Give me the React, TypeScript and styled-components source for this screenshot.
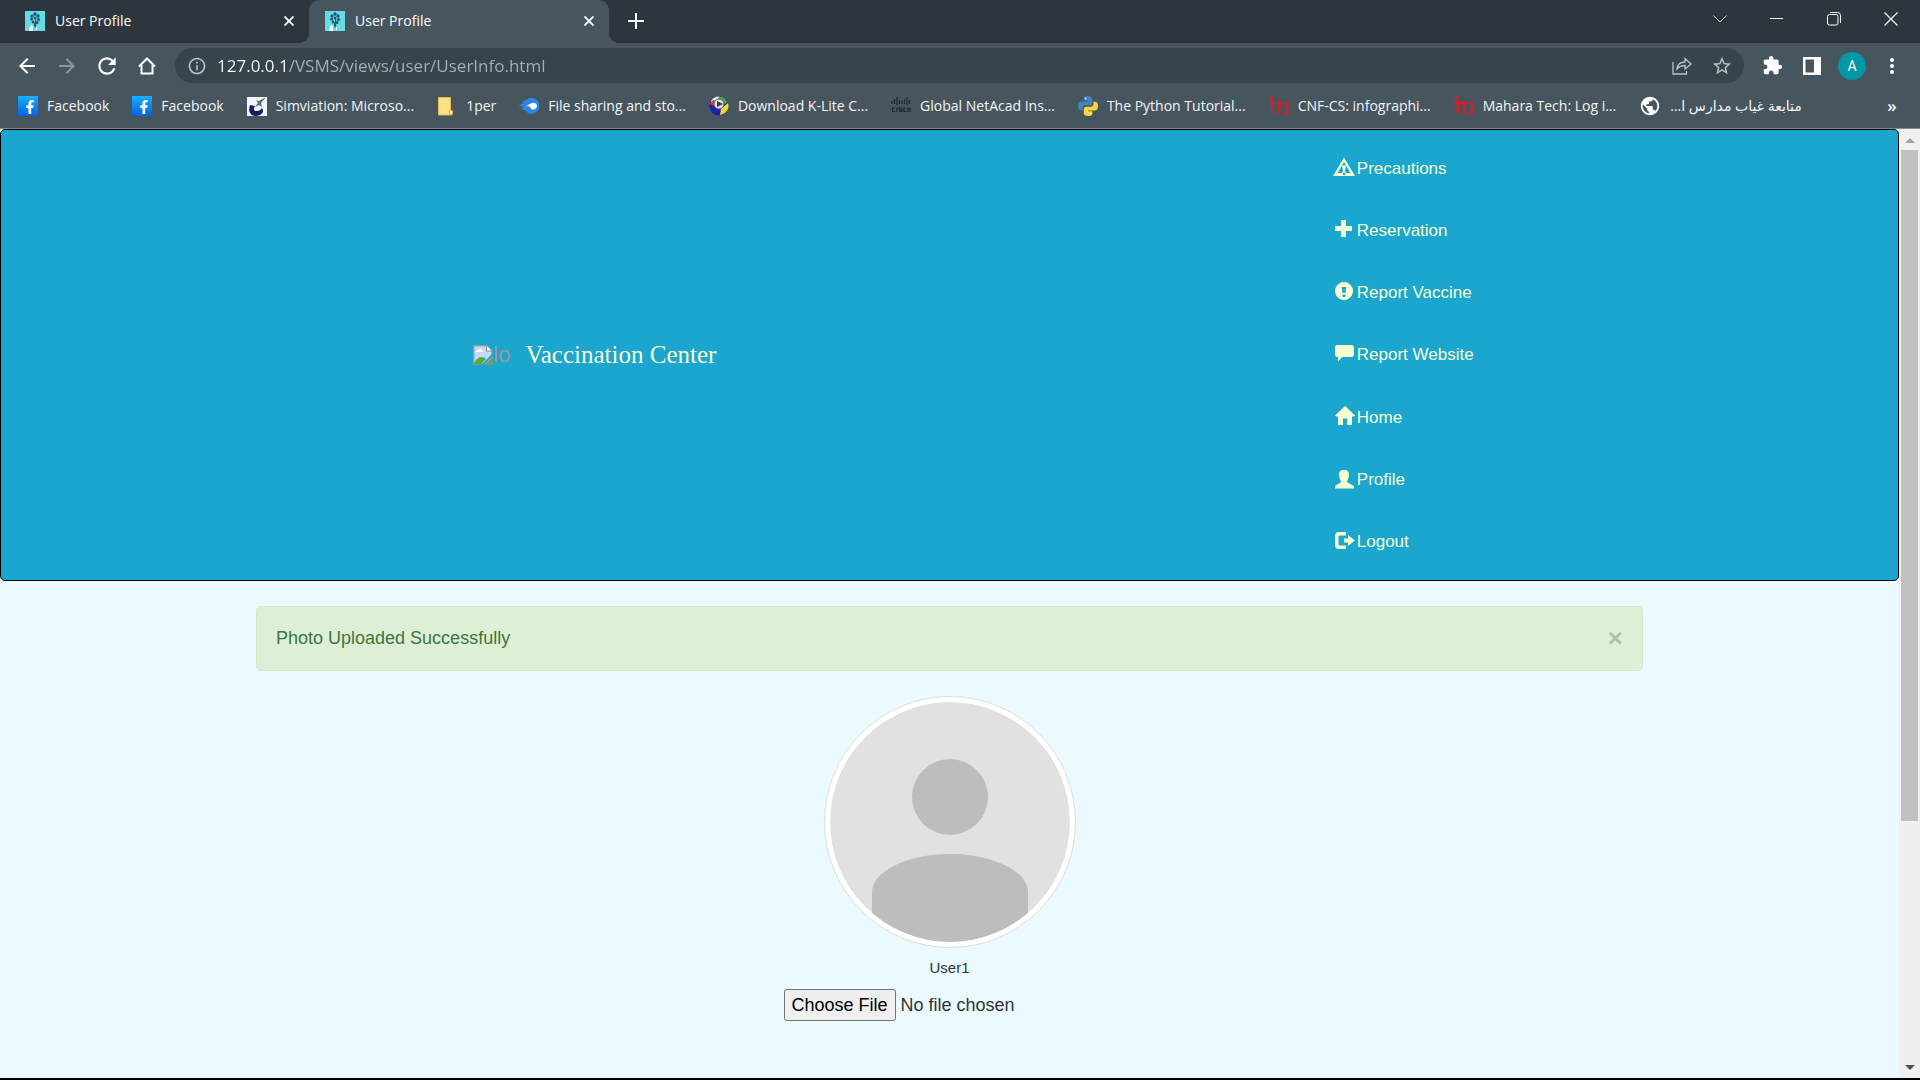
import React, { useId } from "react";
import styled, { createGlobalStyle } from "styled-components";
import { MdExtension, MdInfoOutline, MdStarBorder, MdRefresh, MdPublic, MdArrowBack, MdArrowForward } from "react-icons/md";
import { FaFacebookF } from "react-icons/fa";

const ui = `"Open Sans", "Noto Sans", "DejaVu Sans", sans-serif`;
const sans = `"Liberation Sans", Arial, sans-serif`;

const GlobalStyle = createGlobalStyle`
  * { box-sizing: border-box; }
  body { margin: 0; background: #ebfaff; color: #333; font: 18px/25px ${sans}; }
  button { border: 0; padding: 0; background: none; color: inherit; font: inherit; cursor: pointer; }
  svg { display: block; flex: none; }
`;

const Window = styled.div`
  display: flex;
  flex-direction: column;
  height: 100vh;
  border-bottom: 2px solid #000;
`;

const Chrome = styled.header`
  flex: none;
  background: #46555e;
  border-bottom: 1px solid #80888d;
  color: #fff;
  font-family: ${ui};
`;

const TabStrip = styled.div`
  display: flex;
  height: 43px;
  padding: 0 1px 0 9px;
  background: #2c363c;
`;

const Tab = styled.div<{ $active?: boolean }>`
  position: relative;
  display: flex;
  align-items: center;
  gap: 10px;
  width: 300px;
  padding: 0 10px 2px 16px;
  border-radius: 10px 10px 0 0;
  background: ${(p) => (p.$active ? "#46555e" : "transparent")};
  font-size: 14px;
  line-height: 20px;

  &::before,
  &::after {
    content: ${(p) => (p.$active ? '""' : "none")};
    position: absolute;
    bottom: 0;
    width: 10px;
    height: 10px;
  }
  &::before {
    right: 100%;
    background: radial-gradient(circle at 0 0, transparent 10px, #46555e 10px);
  }
  &::after {
    left: 100%;
    background: radial-gradient(circle at 100% 0, transparent 10px, #46555e 10px);
  }
`;

const TabTitle = styled.span`
  flex: 1;
`;

const TabButton = styled.button`
  display: grid;
  place-items: center;
  width: 20px;
  height: 20px;
`;

const NewTab = styled(TabButton)`
  width: 54px;
  height: 42px;
`;

const WindowControls = styled.div`
  display: flex;
  margin-left: auto;
`;

const WindowButton = styled.button`
  display: grid;
  place-items: center;
  width: 57px;
  height: 38px;
`;

const Toolbar = styled.div`
  display: flex;
  align-items: center;
  gap: 8px;
  height: 45px;
  padding: 0 8px 0 7px;
`;

const ToolGroup = styled.div`
  display: flex;
`;

const ToolButton = styled.button<{ $dim?: boolean }>`
  display: grid;
  place-items: center;
  width: 40px;
  height: 36px;
  color: ${(p) => (p.$dim ? "#8b969c" : "#fff")};
`;

const Omnibox = styled.div`
  display: flex;
  flex: 1;
  align-items: center;
  gap: 10px;
  height: 35px;
  padding: 0 2px 0 12px;
  border-radius: 18px;
  background: #38444b;
  color: #bcc1c4;
`;

const Address = styled.input`
  flex: 1;
  border: 0;
  padding: 0;
  outline: 0;
  color: transparent;
  background: linear-gradient(90deg, #fff 72px, #a9b0b3 72px);
  background-clip: text;
  font: 17px/24px ${ui};
`;

const Account = styled.span`
  display: grid;
  place-items: center;
  width: 28px;
  height: 28px;
  border-radius: 50%;
  background: #0097a7;
  font: 14px/20px Roboto, sans-serif;
`;

const Bookmarks = styled.nav`
  display: flex;
  align-items: center;
  gap: 23px;
  height: 40px;
  padding: 0 8px 4px 18px;
  font-size: 14px;
  line-height: 20px;
`;

const Bookmark = styled.a`
  display: flex;
  align-items: center;
  gap: 9px;
  color: #f4f6f7;
  text-decoration: none;
  white-space: nowrap;
`;

const More = styled.button`
  width: 40px;
  margin-left: auto;
  font-weight: 600;
  font-size: 17px;
`;

const Viewport = styled.div`
  display: flex;
  flex: 1;
  min-height: 0;
`;

const Page = styled.div`
  flex: 1;
  overflow: hidden;
`;

const Scrollbar = styled.div`
  display: flex;
  flex-direction: column;
  flex: none;
  width: 21px;
  padding: 0 2px;
  background: #f0f0f0;
`;

const ScrollArrow = styled.button`
  display: grid;
  place-items: center;
  height: 21px;
`;

const Track = styled.div`
  flex: 1;
`;

const Thumb = styled.div`
  height: 74%;
  background: #c1c1c1;
`;

const Navbar = styled.header`
  display: grid;
  grid-template-columns: 249fr 452fr 299fr;
  align-items: center;
  padding: 7px 0;
  border: 1px solid #000;
  border-radius: 5px;
  background: #1aa6ce;
`;

const Brand = styled.a`
  display: flex;
  align-items: center;
  grid-column: 2;
  gap: 15px;
  color: #f7ffd2;
  font: 25px/30px "Liberation Serif", Georgia, serif;
  text-decoration: none;
`;

const MissingLogo = styled.span`
  display: flex;
  align-items: center;
  color: #999;
  font: 22px/26px ${sans};
`;

const Menu = styled.ul`
  display: grid;
  grid-auto-rows: 1fr;
  height: 436px;
  margin: 0;
  padding: 0 0 0 2px;
  list-style: none;
`;

const MenuItem = styled.li`
  display: flex;
  align-items: center;
`;

const MenuLink = styled.a`
  display: flex;
  align-items: center;
  gap: 2px;
  color: #f7ffd2;
  font-size: 17px;
  text-decoration: none;

  svg { margin-bottom: 2px; }
`;

const Content = styled.main`
  display: flex;
  flex-direction: column;
  align-items: center;
  padding: 25px 20px;
`;

const Alert = styled.div`
  display: flex;
  align-items: center;
  justify-content: space-between;
  width: 100%;
  max-width: 1387px;
  padding: 19px;
  border: 1px solid #d6e9c6;
  border-radius: 5px;
  background: #deefd8;
  color: #3c763d;
`;

const Dismiss = styled.button`
  color: #000;
  font-weight: 700;
  font-size: 26px;
  line-height: 25px;
  opacity: 0.2;
`;

const Profile = styled.form`
  display: flex;
  flex-direction: column;
  align-items: center;
  width: 332px;
  margin-top: 25px;
`;

const Photo = styled.svg`
  width: 252px;
  height: 252px;
  padding: 5px;
  border: 1px solid #ddd;
  border-radius: 50%;
  background: #fff;
`;

const UserName = styled.label`
  margin: 10px 0 11px;
  font-size: 15px;
  line-height: 20px;
`;

const FileInput = styled.input`
  width: 100%;
  color: #333;
  font: 18px/25px ${sans};

  &::file-selector-button {
    height: 32px;
    margin: 0 5px 0 0;
    padding: 0 7px;
    border: 1px solid #767676;
    border-radius: 3px;
    background: #efefef;
    color: #000;
    font: 18px/25px ${sans};
  }
`;

const Favicon = () => (
  <svg width="20" height="20" viewBox="0 0 20 20">
    <path fill="#67dbe2" d="M0 0h20v20H0z" />
    <g fill="#165a78">
      <circle cx="10" cy="3" r="1.7" /><circle cx="7" cy="5" r="1.6" /><circle cx="13" cy="5" r="1.7" />
      <circle cx="6.500" cy="8" r="1.500" /><circle cx="10" cy="7" r="1.500" /><circle cx="13.500" cy="8.500" r="1.600" />
      <circle cx="8" cy="11" r="1.400" /><circle cx="12" cy="11.500" r="1.500" />
      <path d="M9.500 8h1.300l.4 7-1.200 2-.9-2z" />
    </g>
    <path fill="#effcfd" d="M5 15l2-1 1 2v4H4zM11 16h1v3h-1z" />
    <path fill="#bda974" d="M9 8h1v3H9z" />
  </svg>
);

const FacebookIcon = () => {
  const id = useId();
  return (
    <svg width="20" height="20" viewBox="0 0 20 20">
      <defs>
        <linearGradient id={id} x1="0" y1="0" x2="0" y2="1">
          <stop stopColor="#18aefe" /><stop offset="1" stopColor="#0062e0" />
        </linearGradient>
      </defs>
      <path fill={`url(#${id})`} d="M0 0h20v20H0z" />
      <FaFacebookF x={5} y={4} width={12} height={17} color="#fff" />
    </svg>
  );
};

const SimviationIcon = () => (
  <svg width="20" height="20" viewBox="0 0 20 20">
    <path fill="#f5f6fa" d="M0 1h20v19H0z" />
    <path fill="#10205e" d="M3 9l5 1c-2 3-1 5 1 5 3 0 5-1 6-3 3 4-1 8-6 8-6 0-8-5-6-11z" />
    <path fill="#5b6b80" d="M19 1l-5 6 1 4-3-2-4 2 3-4-2-3 3 1z" />
  </svg>
);

const FolderIcon = () => (
  <svg width="20" height="20" viewBox="0 0 20 20">
    <path fill="#ffe08a" stroke="#e5bd45" d="M1.500 1.500h12v13l1.500.500v4H1.500z" />
    <path fill="#ffefb4" stroke="#d6ab31" d="M12.500 14.500h3v4h-3z" />
  </svg>
);

const MediaFireIcon = () => (
  <svg width="20" height="20" viewBox="0 0 20 20">
    <path fill="#2b86df" d="M0 10c1-2 3-2 5-3-1-1-2-1-3-1 2-1 4-1 5-2a8 8 0 1 1 2 13c-2-1-2-3-4-3s-2-1-3-1c1-1 2-1 2-2-1-1-3-1-4-1z" />
    <path fill="#fff" d="M7 9c2 0 3 0 5-1.500 3-2 6 0 6 2.500s-3 4.500-6 3c0-2-2-3-5-4z" />
  </svg>
);

const KLiteIcon = () => (
  <svg width="20" height="20" viewBox="0 0 20 20">
    <circle cx="10" cy="10" r="9.500" fill="#1c21a8" />
    <path fill="#f0ece8" d="M2 5a9.500 9.500 0 0 1 8-4.500L9 6 4 9z" />
    <path fill="#d9402a" d="M1 8l3-4 4 1-3 5z" />
    <path fill="#4ba543" d="M10 .5a9.500 9.500 0 0 1 8.500 6L14 9 9 4z" />
    <path fill="#f2dc29" d="M19 7c2 6-2 11-8 12l1-6z" />
    <circle cx="10" cy="8" r="5" fill="#dfe3e8" stroke="#555c66" />
    <path fill="#353b42" d="M8 5l6 3-6 3z" />
  </svg>
);

const CiscoIcon = () => (
  <svg width="20" height="20" viewBox="0 0 20 20" fill="none" stroke="#20292e">
    <path strokeWidth="1.200" d="M1 5v3M3.500 3v5M6 1v8M8.500 4v4M11 5v3M13.500 3v5M16 1v8M18.500 4v4" />
    <path strokeWidth="1.200" d="M4 12H1.500v3.500H4M6 11.500v4.500M11 12H8.500v1.700h2.500v1.800H8M15 12h-2v3.500h2M17 12h2v3.500h-2z" />
  </svg>
);

const PythonIcon = () => (
  <svg width="20" height="20" viewBox="0 0 20 20">
    <path fill="#4584b6" d="M9.800 0C6 0 5.600 1.600 5.600 2.500v2.200H10v.8H3.200C1 5.500 0 7.300 0 10s1.200 4.300 2.700 4.300h1.800v-2.300c0-1.600 1.300-2.700 2.800-2.700h4.600c1.400 0 2.300-1 2.300-2.300V2.500C14.200.8 12.300 0 9.800 0z" />
    <path fill="#ffd43b" d="M10.200 20c3.800 0 4.200-1.600 4.200-2.500v-2.200H10v-.8h6.800c2.200 0 3.200-1.800 3.200-4.500s-1.200-4.300-2.700-4.300h-1.800V8c0 1.600-1.300 2.700-2.800 2.700H8.100c-1.400 0-2.300 1-2.300 2.300v4.500C5.800 19.200 7.700 20 10.200 20z" />
    <circle cx="7.600" cy="2.600" r=".9" fill="#fff" /><circle cx="12.400" cy="17.400" r=".9" fill="#fff" />
  </svg>
);

const ItiIcon = () => (
  <svg width="20" height="20" viewBox="0 0 20 20" fill="none" stroke="#c4262c" strokeWidth="2.800">
    <path d="M3 0v3M0 5.500h3.500V17M6 7h8M10 7v11M18 9v8l-3 2M16 7h4" />
  </svg>
);

const BrokenImage = () => (
  <svg width="20" height="20" viewBox="0 0 20 20">
    <path fill="#c5d8f5" stroke="#9a9a9a" strokeWidth="1.400" d="M.7.700h13L19 6v7l-6 6H.7z" />
    <path fill="#fff" stroke="#888" d="M13.500.7V6H19" />
    <path fill="#fff" d="M3 7c0-2 2-2 2-2 1-2 4-1 4 1h1v1z" />
    <path fill="#5bab3a" d="M1 19c1-4 4-7 8-7 2 0 3 1 4 2l-5 5z" />
    <path fill="#1aa6ce" d="M20 8v3l-9 9H8z" />
    <path fill="#7d9770" d="M20 13v7h-7z" />
  </svg>
);

const Glyph = ({ d }: { d: string }) => (
  <svg width="22" height="20" viewBox="0 0 22 20" fill="currentColor" fillRule="evenodd"><path d={d} /></svg>
);

const menu = [
  { label: "Precautions", d: "M11 0.500L22 19H0zM11 5L4.500 16h4.300l1.200-2-1-5.500h4L12 14l1.200 2h4.300zM10 15.500h2V18h-2z" },
  { label: "Reservation", d: "M8 1.500Q8 1 8.500 1h4q.5 0 .5.500V7h5.500q.5 0 .5.500v4q0 .5-.5.500H13v5.500q0 .5-.5.500h-4q-.5 0-.5-.5V12H2.500Q2 12 2 11.500v-4Q2 7 2.500 7H8z" },
  { label: "Report Vaccine", d: "M11 0a9 9 0 1 0 .01 0zM8.800 5h4.400l-.8 6H9.600zM9.500 12.500h3v2.500h-3z" },
  { label: "Report Website", d: "M4 1h14q3 0 3 3v6q0 3-3 3H9l-4 4.500V13H4q-2 0-2-3V4q0-3 2-3z" },
  { label: "Home", d: "M12 0L22 9.500l-1 1h-2V19h-5v-6.500h-4V19H5v-8.500H3l-1-1z" },
  { label: "Profile", d: "M11 1c4 0 5 2 5 5 0 2-1 5-2 6v1c2 2 7 3 7 5v1.500H2V18c0-2 4-3 6-5v-1c-1-1-2-4-2-6 0-3 1-5 5-5z" },
  { label: "Logout", d: "M6 1h7v3.500H7Q5.500 4.500 5.500 6v7q0 1.500 1.500 1.500h6V18H6q-4 0-4-4V5q0-4 4-4zM15 4l7 5.500-7 5.500v-3.500h-4v-4h4z" },
];

const bookmarks = [
  { label: "Facebook", icon: <FacebookIcon /> },
  { label: "Facebook", icon: <FacebookIcon /> },
  { label: "Simviation: Microso...", icon: <SimviationIcon /> },
  { label: "1per", icon: <FolderIcon /> },
  { label: "File sharing and sto...", icon: <MediaFireIcon /> },
  { label: "Download K-Lite C...", icon: <KLiteIcon /> },
  { label: "Global NetAcad Ins...", icon: <CiscoIcon /> },
  { label: "The Python Tutorial...", icon: <PythonIcon /> },
  { label: "CNF-CS: infographi...", icon: <ItiIcon /> },
  { label: "Mahara Tech: Log i...", icon: <ItiIcon /> },
  { label: "متابعة غياب مدارس ا...", icon: <MdPublic size={22} color="#fff" />, rtl: true },
];

const BrowserTab = ({ active }: { active?: boolean }) => (
  <Tab $active={active}>
    <Favicon />
    <TabTitle>User Profile</TabTitle>
    <TabButton aria-label="Close tab">
      <svg width="10" height="10" viewBox="0 0 10 10" stroke="#fff" strokeWidth="1.800"><path d="M.5.500l9 9M9.500.500l-9 9" /></svg>
    </TabButton>
  </Tab>
);

export default function App() {
  return (
    <>
      <GlobalStyle />
      <Window>
        <Chrome>
          <TabStrip>
            <BrowserTab />
            <BrowserTab active />
            <NewTab aria-label="New tab">
              <svg width="16" height="16" viewBox="0 0 16 16" stroke="#fff" strokeWidth="2"><path d="M8 0v16M0 8h16" /></svg>
            </NewTab>
            <WindowControls>
              <WindowButton aria-label="Search tabs">
                <svg width="14" height="8" viewBox="0 0 14 8" fill="none" stroke="#d5d8da"><path d="M.5.500L7 7 13.500.500" /></svg>
              </WindowButton>
              <WindowButton aria-label="Minimize">
                <svg width="13" height="2" viewBox="0 0 13 2"><path fill="#fff" d="M0 0h13v1H0z" /></svg>
              </WindowButton>
              <WindowButton aria-label="Restore">
                <svg width="14" height="14" viewBox="0 0 14 14" fill="none" stroke="#fff"><rect x=".5" y="2.500" width="10.500" height="10.500" rx="2" /><path d="M3 .5h7.500a3 3 0 0 1 3 3V11" /></svg>
              </WindowButton>
              <WindowButton aria-label="Close">
                <svg width="14" height="14" viewBox="0 0 14 14" stroke="#fff" strokeWidth="1.200"><path d="M.5.500l13 13M13.500.500l-13 13" /></svg>
              </WindowButton>
            </WindowControls>
          </TabStrip>
          <Toolbar>
            <ToolGroup>
              <ToolButton aria-label="Back"><MdArrowBack size={24} /></ToolButton>
              <ToolButton aria-label="Forward" $dim><MdArrowForward size={24} /></ToolButton>
              <ToolButton aria-label="Reload"><MdRefresh size={26} /></ToolButton>
              <ToolButton aria-label="Home">
                <svg width="18" height="18" viewBox="0 0 18 18" fill="none" stroke="#fff" strokeWidth="2"><path d="M1 9.500L9 1.500l8 8M3.500 8v8.500h11V8" /></svg>
              </ToolButton>
            </ToolGroup>
            <Omnibox>
              <MdInfoOutline size={20} />
              <Address aria-label="Address" defaultValue="127.0.0.1/VSMS/views/user/UserInfo.html" />
              <ToolGroup>
                <ToolButton aria-label="Share">
                  <svg width="20" height="18" viewBox="0 0 20 18" fill="none" stroke="#bcc1c4" strokeWidth="1.300"><path d="M1 5v12h13.500v-3M5 12c.5-5 4-7 8-7V1.500L19 7l-6 5V8.500c-4 0-6 1-8 3.500z" /></svg>
                </ToolButton>
                <ToolButton aria-label="Bookmark this page" $dim><MdStarBorder size={22} color="#bcc1c4" /></ToolButton>
              </ToolGroup>
            </Omnibox>
            <ToolGroup>
              <ToolButton aria-label="Extensions"><MdExtension size={21} /></ToolButton>
              <ToolButton aria-label="Side panel">
                <svg width="18" height="18" viewBox="0 0 18 18"><path fill="#fff" fillRule="evenodd" d="M0 0h18v18H0zM2.500 2.500v13H11v-13z" /></svg>
              </ToolButton>
              <ToolButton aria-label="Account"><Account>A</Account></ToolButton>
              <ToolButton aria-label="Menu">
                <svg width="4" height="16" viewBox="0 0 4 16" fill="#fff"><circle cx="2" cy="2" r="2" /><circle cx="2" cy="8" r="2" /><circle cx="2" cy="14" r="2" /></svg>
              </ToolButton>
            </ToolGroup>
          </Toolbar>
          <Bookmarks aria-label="Bookmarks">
            {bookmarks.map((b, i) => (
              <Bookmark key={i} href="#">
                {b.icon}
                <span dir={b.rtl ? "rtl" : "ltr"}>{b.label}</span>
              </Bookmark>
            ))}
            <More aria-label="More bookmarks">»</More>
          </Bookmarks>
        </Chrome>
        <Viewport>
          <Page>
            <Navbar>
              <Brand href="#">
                <MissingLogo><BrokenImage />lo</MissingLogo>
                Vaccination Center
              </Brand>
              <Menu>
                {menu.map((m) => (
                  <MenuItem key={m.label}>
                    <MenuLink href="#"><Glyph d={m.d} />{m.label}</MenuLink>
                  </MenuItem>
                ))}
              </Menu>
            </Navbar>
            <Content>
              <Alert role="alert">
                Photo Uploaded Successfully
                <Dismiss aria-label="Close">×</Dismiss>
              </Alert>
              <Profile>
                <Photo viewBox="0 0 240 240" role="img" aria-label="User photo">
                  <clipPath id="photo"><circle cx="120" cy="120" r="120" /></clipPath>
                  <g clipPath="url(#photo)">
                    <path fill="#e1e1e1" d="M0 0h240v240H0z" />
                    <circle cx="120" cy="95" r="38" fill="#bdbdbd" />
                    <path fill="#bdbdbd" d="M42 240v-50c0-20 34-38 78-38s78 18 78 38v50z" />
                  </g>
                </Photo>
                <UserName htmlFor="photo-file">User1</UserName>
                <FileInput id="photo-file" type="file" />
              </Profile>
            </Content>
          </Page>
          <Scrollbar>
            <ScrollArrow aria-label="Scroll up">
              <svg width="10" height="6" viewBox="0 0 10 6"><path fill="#a3a3a3" d="M0 6l5-5 5 5z" /></svg>
            </ScrollArrow>
            <Track><Thumb /></Track>
            <ScrollArrow aria-label="Scroll down">
              <svg width="10" height="6" viewBox="0 0 10 6"><path fill="#505050" d="M0 0h10L5 5z" /></svg>
            </ScrollArrow>
          </Scrollbar>
        </Viewport>
      </Window>
    </>
  );
}
